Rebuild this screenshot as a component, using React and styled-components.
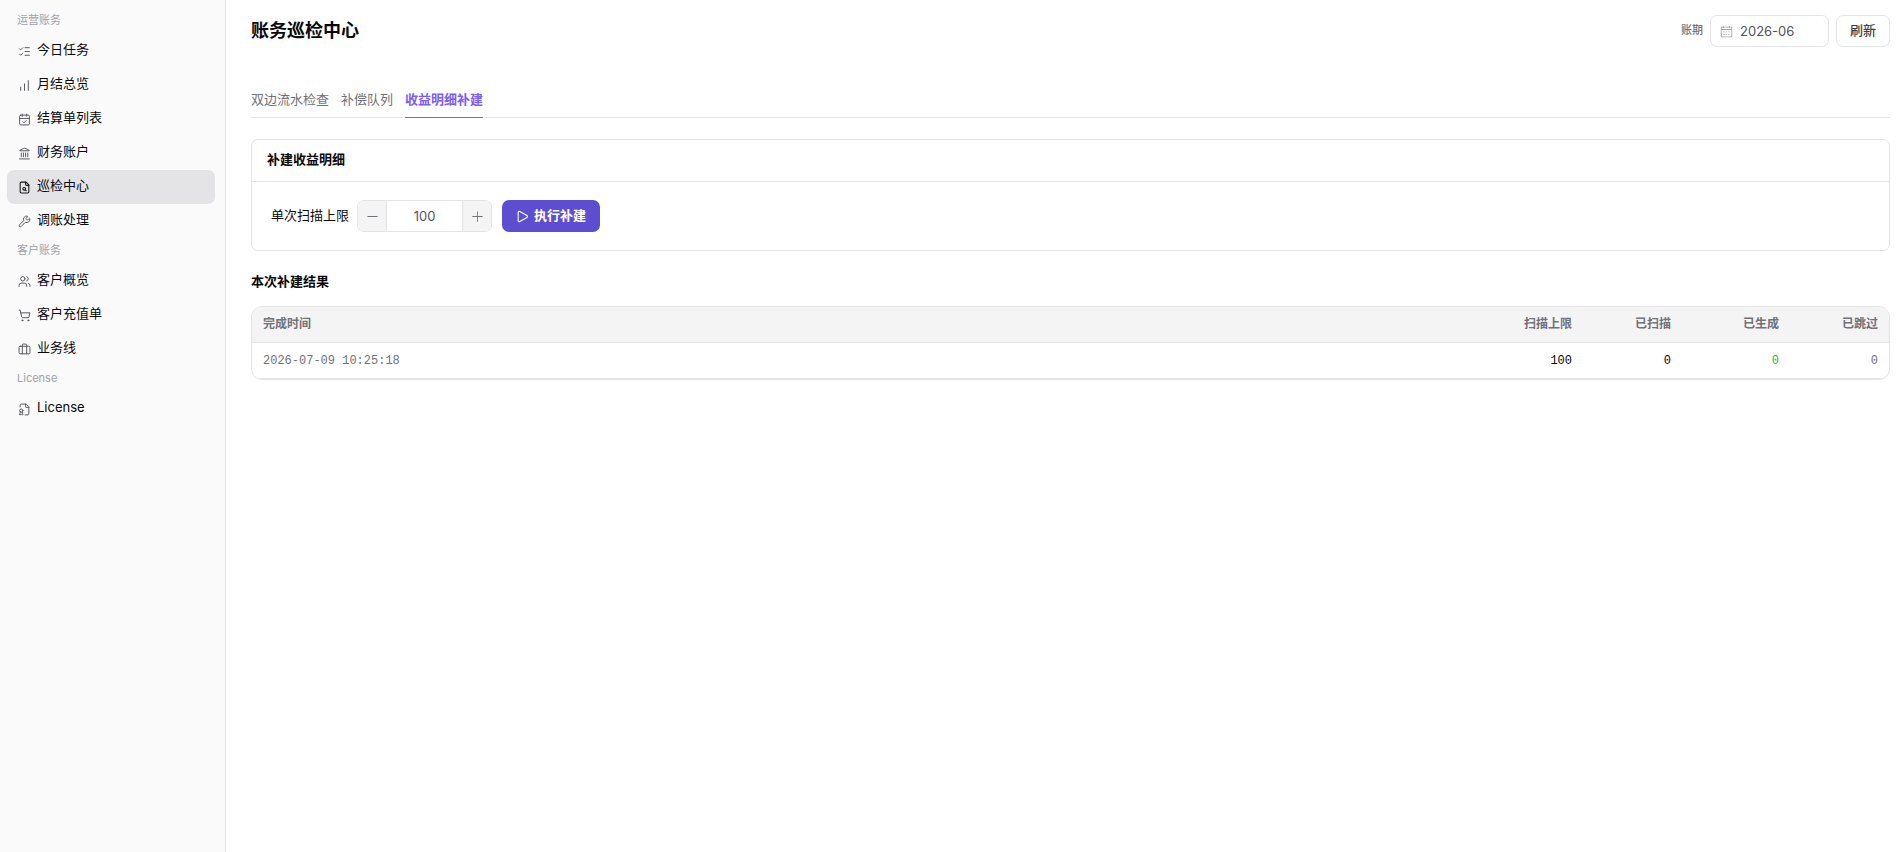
import React, { useState } from 'react';
import styled, { createGlobalStyle, css } from 'styled-components';
import {
  Briefcase,
  CalendarCheck,
  ChartNoAxesColumnIncreasing,
  FileBadge,
  Landmark,
  ListChecks,
  ShoppingCart,
  Users,
  Wrench,
} from 'lucide-react';

const GlobalStyle = createGlobalStyle`
  * {
    box-sizing: border-box;
  }

  body {
    margin: 0;
    background: #fff;
    color: #09090b;
    font-family: Inter, 'Noto Sans CJK SC', sans-serif;
    font-size: 13px;
    line-height: 20px;
  }

  button,
  input {
    font: inherit;
    color: inherit;
    margin: 0;
  }
`;

const Layout = styled.div`
  display: flex;
  min-height: 100vh;
`;

const Sidebar = styled.nav`
  flex: none;
  width: 226px;
  padding: 8px 10px 8px 7px;
  background: #fafafa;
  border-right: 1px solid #e4e4e7;
`;

const GroupTitle = styled.div`
  height: 26px;
  padding-left: 10px;
  font-size: 11px;
  line-height: 24px;
  color: #a1a1aa;
`;

const NavLink = styled.a`
  display: flex;
  align-items: center;
  gap: 6px;
  height: 34px;
  padding: 0 11px;
  border-radius: 7px;
  color: #09090b;
  text-decoration: none;

  svg {
    flex: none;
    color: #52525b;
  }

  ${props =>
    props.$active &&
    css`
      background: #e4e4e7;

      svg {
        color: #18181b;
      }
    `};
`;

const NavText = styled.span`
  padding-bottom: 4px;
`;

const Main = styled.main`
  flex: 1;
  min-width: 0;
  padding: 15px 14px 24px 25px;
`;

const Header = styled.header`
  display: flex;
  align-items: center;
  justify-content: space-between;
  height: 32px;
`;

const PageTitle = styled.h1`
  margin: 0;
  font-size: 18px;
  line-height: 28px;
  font-weight: 600;
`;

const HeaderTools = styled.div`
  display: flex;
  align-items: center;
  gap: 7px;
`;

const ToolLabel = styled.label`
  padding-bottom: 2px;
  font-size: 11px;
  font-weight: 500;
  color: #71717a;
`;

const MonthPicker = styled.div`
  display: flex;
  align-items: center;
  gap: 7px;
  width: 119px;
  height: 32px;
  padding: 0 9px;
  border: 1px solid #e4e4e7;
  border-radius: 7px;

  svg {
    flex: none;
    color: #a1a1aa;
  }
`;

const MonthInput = styled.input`
  width: 100%;
  min-width: 0;
  padding: 0;
  border: 0;
  outline: 0;
  background: transparent;
  color: #52525b;
`;

const RefreshButton = styled.button`
  width: 54px;
  height: 32px;
  padding: 0 0 2px;
  border: 1px solid #e4e4e7;
  border-radius: 7px;
  background: #fff;
  color: #3f3f46;
  font-weight: 500;
  cursor: pointer;
`;

const Tabs = styled.div`
  display: flex;
  gap: 12px;
  margin-top: 36px;
  border-bottom: 1px solid #e4e4e7;
`;

const Tab = styled.button`
  height: 35px;
  margin-bottom: -1px;
  padding: 0 0 2px;
  border: 0;
  border-bottom: 1px solid transparent;
  background: none;
  color: #71717a;
  cursor: pointer;

  ${props =>
    props.$active &&
    css`
      border-color: #7c5cfc;
      color: #7c5cfc;
      font-weight: 600;
    `};
`;

const Card = styled.section`
  margin-top: 21px;
  border: 1px solid #e4e4e7;
  border-radius: 7px;
`;

const CardTitle = styled.h2`
  margin: 0;
  padding: 9px 15px 12px;
  border-bottom: 1px solid #e4e4e7;
  font-size: 13px;
  font-weight: 600;
`;

const ScanForm = styled.form`
  display: flex;
  align-items: center;
  padding: 18px 19px;
`;

const FieldLabel = styled.label`
  padding-bottom: 2px;
`;

const Stepper = styled.div`
  display: flex;
  width: 135px;
  height: 32px;
  margin: 0 10px 0 8px;
  border: 1px solid #e4e4e7;
  border-radius: 7px;
  overflow: hidden;
`;

const StepButton = styled.button`
  display: flex;
  flex: none;
  align-items: center;
  justify-content: center;
  width: 28px;
  padding: 0;
  border: 0;
  background: #f4f4f5;
  color: #71717a;
  cursor: pointer;
`;

const StepInput = styled.input`
  flex: 1;
  min-width: 0;
  padding: 0;
  border: solid #e4e4e7;
  border-width: 0 1px;
  outline: 0;
  background: #fff;
  color: #52525b;
  text-align: center;
`;

const RunButton = styled.button`
  display: flex;
  align-items: center;
  justify-content: center;
  gap: 5px;
  width: 98px;
  height: 32px;
  padding: 0;
  border: 0;
  border-radius: 7px;
  background: #5f4dd0;
  color: #fff;
  font-weight: 600;
  cursor: pointer;

  span {
    padding-bottom: 2px;
  }
`;

const SectionTitle = styled.h2`
  margin: 20px 0 15px;
  font-size: 13px;
  font-weight: 600;
`;

const TableWrap = styled.div`
  border: 1px solid #e4e4e7;
  border-radius: 11px;
  overflow: hidden;
`;

const Table = styled.table`
  width: 100%;
  border-collapse: separate;
  border-spacing: 0;
  table-layout: fixed;
  font-size: 12px;
`;

const Th = styled.th`
  width: ${props => props.$width || 'auto'};
  height: 36px;
  padding: 0 11px 2px;
  background: #f4f4f5;
  border-bottom: 1px solid #e4e4e7;
  color: #71717a;
  font-weight: 600;
  text-align: ${props => (props.$right ? 'right' : 'left')};
`;

const Td = styled.td`
  height: 36px;
  padding: 0 11px;
  border-bottom: 1px solid #e4e4e7;
  color: ${props => props.$color || '#09090b'};
  font-family: 'Liberation Mono', monospace;
  text-align: ${props => (props.$right ? 'right' : 'left')};
`;

const FileSearchIcon = () => (
  <svg width="13" height="13" viewBox="0 0 24 24" fill="none" stroke="currentColor" strokeWidth="2" strokeLinecap="round" strokeLinejoin="round">
    <path d="M15 2H6a2 2 0 0 0-2 2v16a2 2 0 0 0 2 2h12a2 2 0 0 0 2-2V7Z" />
    <path d="M14 2v4a2 2 0 0 0 2 2h4" />
    <circle cx="11.5" cy="14.5" r="2.5" />
    <path d="M13.3 16.3 15 18" />
  </svg>
);

const CalendarIcon = () => (
  <svg width="13" height="13" viewBox="0 0 1024 1024" fill="currentColor">
    <path d="M128 384v512h768V192H768v32a32 32 0 1 1-64 0v-32H320v32a32 32 0 0 1-64 0v-32H128v128h768v64zm192-256h384V96a32 32 0 1 1 64 0v32h160a32 32 0 0 1 32 32v768a32 32 0 0 1-32 32H96a32 32 0 0 1-32-32V160a32 32 0 0 1 32-32h160V96a32 32 0 0 1 64 0zm-32 384h64a32 32 0 0 1 0 64h-64a32 32 0 0 1 0-64m0 192h64a32 32 0 1 1 0 64h-64a32 32 0 1 1 0-64m192-192h64a32 32 0 0 1 0 64h-64a32 32 0 0 1 0-64m0 192h64a32 32 0 1 1 0 64h-64a32 32 0 1 1 0-64m192-192h64a32 32 0 1 1 0 64h-64a32 32 0 1 1 0-64m0 192h64a32 32 0 1 1 0 64h-64a32 32 0 1 1 0-64" />
  </svg>
);

const MinusIcon = () => (
  <svg width="13" height="13" viewBox="0 0 1024 1024" fill="currentColor">
    <path d="M128 544h768a32 32 0 1 0 0-64H128a32 32 0 0 0 0 64" />
  </svg>
);

const PlusIcon = () => (
  <svg width="13" height="13" viewBox="0 0 1024 1024" fill="currentColor">
    <path d="M480 480V128a32 32 0 0 1 64 0v352h352a32 32 0 1 1 0 64H544v352a32 32 0 1 1-64 0V544H128a32 32 0 0 1 0-64z" />
  </svg>
);

const PlayIcon = () => (
  <svg width="13" height="13" viewBox="0 0 24 24" fill="none" stroke="currentColor" strokeWidth="2" strokeLinejoin="round">
    <path d="M4 4.4a2 2 0 0 1 3-1.7l13.2 7.6a2 2 0 0 1 0 3.4L7 21.3a2 2 0 0 1-3-1.7z" />
  </svg>
);

const groups = [
  {
    title: '运营账务',
    items: [
      { label: '今日任务', icon: ListChecks },
      { label: '月结总览', icon: ChartNoAxesColumnIncreasing },
      { label: '结算单列表', icon: CalendarCheck },
      { label: '财务账户', icon: Landmark },
      { label: '巡检中心', icon: FileSearchIcon, active: true },
      { label: '调账处理', icon: Wrench },
    ],
  },
  {
    title: '客户账务',
    items: [
      { label: '客户概览', icon: Users },
      { label: '客户充值单', icon: ShoppingCart },
      { label: '业务线', icon: Briefcase },
    ],
  },
  {
    title: 'License',
    items: [{ label: 'License', icon: FileBadge }],
  },
];

const tabs = ['双边流水检查', '补偿队列', '收益明细补建'];

const App = () => {
  const [tab, setTab] = useState(2);
  const [month, setMonth] = useState('2026-06');
  const [limit, setLimit] = useState(100);

  return (
    <>
      <GlobalStyle />
      <Layout>
        <Sidebar>
          {groups.map(group => (
            <div key={group.title}>
              <GroupTitle>{group.title}</GroupTitle>
              {group.items.map(({ label, icon: Icon, active }) => (
                <NavLink key={label} href="#" $active={active}>
                  <Icon size={13} strokeWidth={1.75} />
                  <NavText>{label}</NavText>
                </NavLink>
              ))}
            </div>
          ))}
        </Sidebar>

        <Main>
          <Header>
            <PageTitle>账务巡检中心</PageTitle>
            <HeaderTools>
              <ToolLabel htmlFor="month">账期</ToolLabel>
              <MonthPicker>
                <CalendarIcon />
                <MonthInput id="month" value={month} onChange={e => setMonth(e.target.value)} />
              </MonthPicker>
              <RefreshButton type="button">刷新</RefreshButton>
            </HeaderTools>
          </Header>

          <Tabs role="tablist">
            {tabs.map((name, i) => (
              <Tab key={name} type="button" role="tab" aria-selected={i === tab} $active={i === tab} onClick={() => setTab(i)}>
                {name}
              </Tab>
            ))}
          </Tabs>

          <Card>
            <CardTitle>补建收益明细</CardTitle>
            <ScanForm onSubmit={e => e.preventDefault()}>
              <FieldLabel htmlFor="limit">单次扫描上限</FieldLabel>
              <Stepper>
                <StepButton type="button" aria-label="-" onClick={() => setLimit(Number(limit) - 1)}>
                  <MinusIcon />
                </StepButton>
                <StepInput id="limit" value={limit} onChange={e => setLimit(e.target.value)} />
                <StepButton type="button" aria-label="+" onClick={() => setLimit(Number(limit) + 1)}>
                  <PlusIcon />
                </StepButton>
              </Stepper>
              <RunButton type="submit">
                <PlayIcon />
                <span>执行补建</span>
              </RunButton>
            </ScanForm>
          </Card>

          <SectionTitle>本次补建结果</SectionTitle>
          <TableWrap>
            <Table>
              <thead>
                <tr>
                  <Th>完成时间</Th>
                  <Th $right $width="108px">扫描上限</Th>
                  <Th $right $width="99px">已扫描</Th>
                  <Th $right $width="108px">已生成</Th>
                  <Th $right $width="99px">已跳过</Th>
                </tr>
              </thead>
              <tbody>
                <tr>
                  <Td $color="#71717a">2026-07-09 10:25:18</Td>
                  <Td $right>100</Td>
                  <Td $right>0</Td>
                  <Td $right $color="#22b455">0</Td>
                  <Td $right $color="#71717a">0</Td>
                </tr>
              </tbody>
            </Table>
          </TableWrap>
        </Main>
      </Layout>
    </>
  );
};

export default App;
